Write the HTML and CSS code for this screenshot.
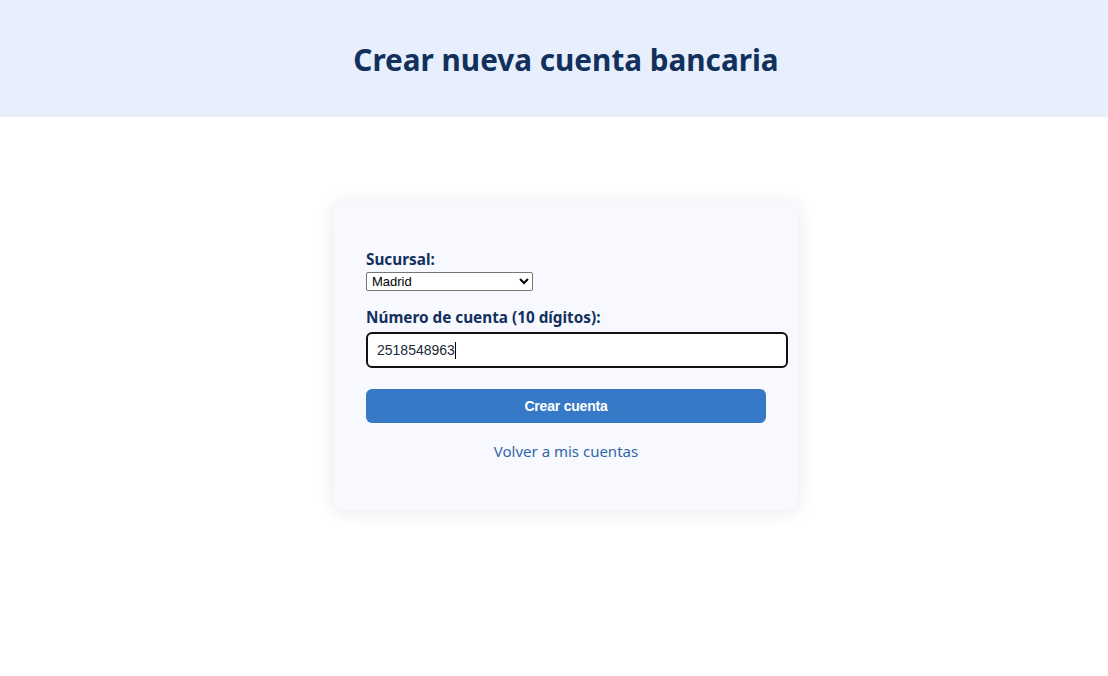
FILE: index.html
```html
<!DOCTYPE html>
<html lang="es">
<head>
<meta charset="utf-8">
<title>Crear nueva cuenta bancaria</title>
<link rel="stylesheet" href="styles.css">
</head>
<body>
<header class="top">
  <h1 class="title">Crear nueva cuenta bancaria</h1>
</header>
<main class="main">
  <section class="card">
    <form class="form">
      <div class="field">
        <label class="label" for="suc">Sucursal:</label>
        <select id="suc" class="select">
          <option>Madrid</option>
          <option>Barcelona</option>
          <option>Valencia</option>
        </select>
      </div>
      <div class="field field-num">
        <label class="label label-num" for="num">Número de cuenta (10 dígitos):</label>
        <div class="input">2518548963<span class="caret"></span></div>
      </div>
      <button type="button" class="btn">Crear cuenta</button>
    </form>
    <a class="back" href="#">Volver a mis cuentas</a>
  </section>
</main>
</body>
</html>
```

FILE: styles.css
```css
* { box-sizing: border-box; }
body {
  margin: 0;
  background: #ffffff;
  font-family: "Noto Sans", "Open Sans", sans-serif;
  color: #12305c;
}
.top {
  background: #e7effc;
  height: 117px;
  padding: 42px 0 0 24px;
}
.title {
  margin: 0;
  text-align: center;
  font-size: 29.7px;
  line-height: 36px;
  font-weight: 700;
  color: #12305c;
}
.main {
  display: flex;
  justify-content: center;
  padding: 84px 0 60px 24px;
}
.card {
  width: 464px;
  background: #f7f9fe;
  border-radius: 12px;
  box-shadow: 0 2px 18px rgba(20, 30, 60, 0.1);
  padding: 48px 32px 49px 32px;
}
.form { display: flex; flex-direction: column; }
.field { display: flex; flex-direction: column; align-items: flex-start; }
.label {
  font-size: 15.3px;
  line-height: 20px;
  font-weight: 700;
  color: #12305c;
  margin-bottom: 3px;
}
.select {
  width: 167px;
  height: 19px;
  font-family: "Liberation Sans", Arial, sans-serif;
  font-size: 13px;
  color: #000;
  background: #fff;
  border: 1px solid #767676;
  border-radius: 2px;
  padding: 0 0 0 1px;
}
.field-num { margin-top: 16px; }
.label-num { margin-bottom: 5px; }
.input {
  width: 422px;
  height: 36px;
  border: 2px solid #111;
  border-radius: 6px;
  background: #fff;
  padding: 0 9px;
  font-family: "Liberation Sans", Arial, sans-serif;
  font-size: 14px;
  line-height: 32px;
  color: #1d2a3a;
  display: flex;
  align-items: center;
}
.caret {
  display: inline-block;
  width: 1px;
  height: 17px;
  background: #000;
}
.btn {
  margin-top: 21px;
  height: 34px;
  width: 100%;
  border: none;
  border-radius: 6px;
  background: #3679c7;
  color: #fff;
  font-family: "Liberation Sans", Arial, sans-serif;
  font-size: 14px;
  font-weight: 700;
  letter-spacing: -0.2px;
}
.back {
  display: block;
  margin-top: 18px;
  text-align: center;
  font-size: 15px;
  line-height: 20px;
  color: #3266a6;
  text-decoration: none;
}
```
